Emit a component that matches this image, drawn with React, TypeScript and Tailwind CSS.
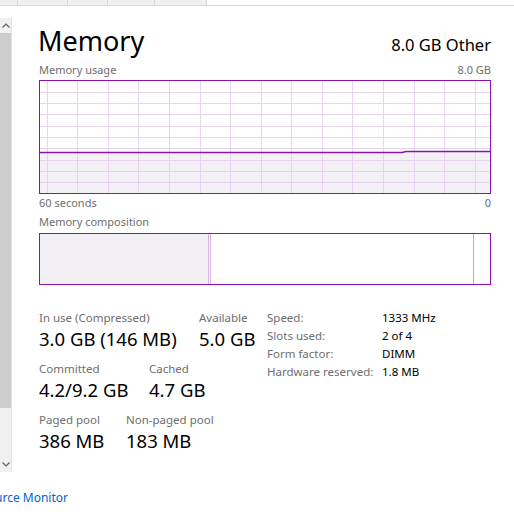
import React from 'react';

const PURPLE = '#8b12ae';
const GRID = '#e7d5ee';

const vLines = [7.5, 37.5, 68.5, 98.5, 129.5, 160.5, 190.5, 221.5, 251.5, 282.5, 312.5, 343.5, 374.5, 404.5, 435.5];
const hLines = [11.5, 22.5, 33.5, 45.5, 56.5, 67.5, 79.5, 90.5, 101.5];

function UsageGraph() {
  return (
    <div className="border border-[#8b12ae] w-[452px] h-[114px]">
      <svg width={450} height={112} className="block">
        <path d="M0 71.5 L362 71.5 L366 70.5 L450 70.5 L450 112 L0 112 Z" fill="#f3f1f5" />
        {vLines.map((x) => (
          <line key={'v' + x} x1={x} x2={x} y1={0} y2={112} stroke={GRID} strokeWidth={1} />
        ))}
        {hLines.map((y) => (
          <line key={'h' + y} x1={0} x2={450} y1={y} y2={y} stroke={GRID} strokeWidth={1} />
        ))}
        <path d="M0 71.5 L362 71.5 L366 70.5 L450 70.5" stroke={PURPLE} strokeWidth={1.4} fill="none" />
      </svg>
    </div>
  );
}

function Composition() {
  return (
    <div className="flex border border-[#8b12ae] w-[452px] h-[52px]">
      <div className="w-[169px] bg-[#f2f0f4] border-r border-[#d7b2e2]" />
      <div className="w-[1px]" />
      <div className="w-[1px] bg-[#d7b2e2]" />
      <div className="w-[262px]" />
      <div className="w-[1px] bg-[#c9a0d6]" />
      <div className="flex-1" />
    </div>
  );
}

function Stat({ label, value, width }: { label: string; value: string; width?: string }) {
  return (
    <div className={width}>
      <div className="text-[11.5px] leading-[16px] text-[#6e6e6e]">{label}</div>
      <div className="text-[18.5px] leading-[25px] text-black">{value}</div>
    </div>
  );
}

function Scrollbar() {
  return (
    <div className="mt-[12px] w-[12px] h-[454px] flex flex-col bg-[#f0f0f0] border-r border-[#e3e3e3]">
      <div className="h-[15px] flex items-center justify-center">
        <svg width="8" height="5" viewBox="0 0 8 5">
          <path d="M0.5 4.5 L4 1 L7.5 4.5" stroke="#606060" strokeWidth="1.2" fill="none" />
        </svg>
      </div>
      <div className="h-[375px] bg-[#cdcdcd]" />
      <div className="flex-1" />
      <div className="h-[16px] flex items-center justify-center">
        <svg width="8" height="5" viewBox="0 0 8 5">
          <path d="M0.5 0.5 L4 4 L7.5 0.5" stroke="#606060" strokeWidth="1.2" fill="none" />
        </svg>
      </div>
    </div>
  );
}

export default function App() {
  const specs = [
    ['Speed:', '1333 MHz'],
    ['Slots used:', '2 of 4'],
    ['Form factor:', 'DIMM'],
    ['Hardware reserved:', '1.8 MB'],
  ];

  return (
    <div
      className="relative w-[514px] h-[515px] overflow-hidden bg-white text-black"
      style={{ fontFamily: '"Segoe UI", "Noto Sans", "Open Sans", sans-serif' }}
    >
      <div className="flex h-[6px] border-b border-[#d9d9d9]">
        <div className="w-[18px] bg-[#f0f0f0] border-r border-[#d9d9d9]" />
        <div className="w-[50px] bg-[#f0f0f0] border-r border-[#d9d9d9]" />
        <div className="w-[40px] bg-[#f0f0f0] border-r border-[#d9d9d9]" />
        <div className="w-[47px] bg-[#f0f0f0] border-r border-[#d9d9d9]" />
        <div className="w-[52px] bg-[#f0f0f0] border-r border-[#d9d9d9]" />
      </div>

      <div className="flex">
        <Scrollbar />
        <div className="ml-[27px] w-[452px]">
          <div className="flex items-baseline justify-between h-[54px] pt-[18px]">
            <div className="text-[27px] leading-[34px] -ml-[1px]">Memory</div>
            <div className="text-[16.5px] leading-[20px]">8.0 GB Other</div>
          </div>

          <div className="flex justify-between text-[11px] leading-[20px] text-[#6e6e6e]">
            <span>Memory usage</span>
            <span>8.0 GB</span>
          </div>
          <UsageGraph />
          <div className="flex justify-between text-[11px] leading-[18px] text-[#6e6e6e]">
            <span>60 seconds</span>
            <span>0</span>
          </div>
          <div className="mt-[2px] pb-[4px] text-[11px] leading-[15px] text-[#6e6e6e]">Memory composition</div>
          <Composition />

          <div className="flex mt-[25px]">
            <div className="w-[228px] flex flex-col gap-[2px]">
              <div className="flex">
                <Stat label="In use (Compressed)" value="3.0 GB (146 MB)" width="w-[160px]" />
                <Stat label="Available" value="5.0 GB" />
              </div>
              <div className="flex mt-[8px]">
                <Stat label="Committed" value="4.2/9.2 GB" width="w-[110px]" />
                <Stat label="Cached" value="4.7 GB" />
              </div>
              <div className="flex mt-[8px]">
                <Stat label="Paged pool" value="386 MB" width="w-[87px]" />
                <Stat label="Non-paged pool" value="183 MB" />
              </div>
            </div>
            <div className="-mt-[1px] text-[11.5px] leading-[18px]">
              {specs.map(([k, v]) => (
                <div key={k} className="flex">
                  <span className="w-[115px] text-[#6e6e6e]">{k}</span>
                  <span>{v}</span>
                </div>
              ))}
            </div>
          </div>
        </div>
      </div>

      <div className="mt-[18px] w-[68px] overflow-hidden flex justify-end whitespace-nowrap text-[12px] leading-[16px] text-[#0066cc]">
        Open Resource Monitor
      </div>
    </div>
  );
}
